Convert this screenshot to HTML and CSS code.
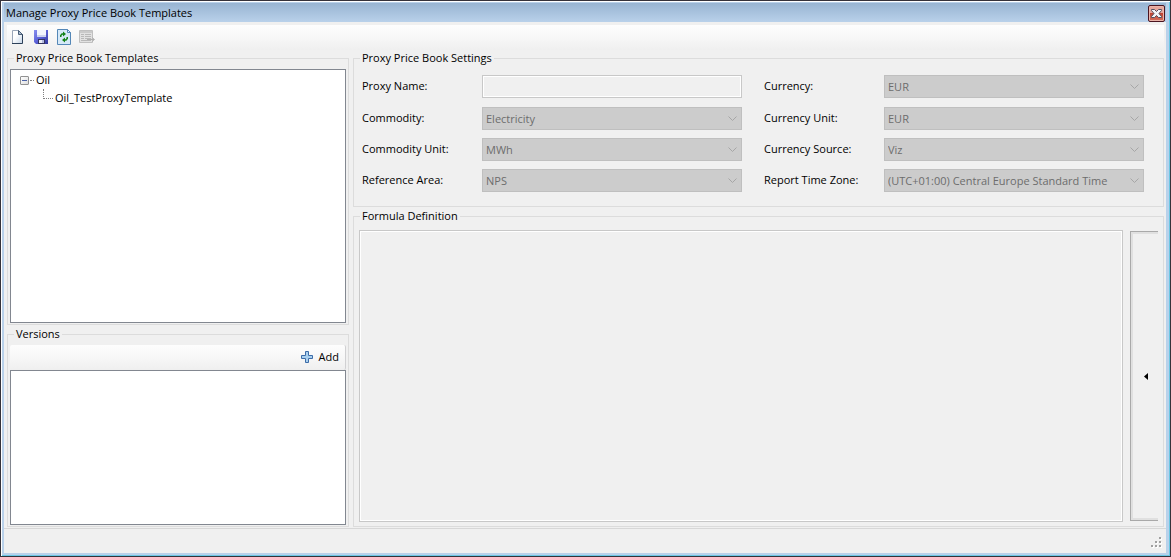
FILE: index.html
```html
<!DOCTYPE html>
<html lang="en">
<head>
<meta charset="utf-8">
<title>Manage Proxy Price Book Templates</title>
<link rel="stylesheet" href="styles.css">
</head>
<body>
<div class="window">
  <header class="titlebar">
    <h1 class="title">Manage Proxy Price Book Templates</h1>
    <button class="close" type="button" aria-label="Close">
      <svg width="11" height="9" viewBox="0 0 11 9"><path d="M0.500 0.500h3l2 2 2-2h3v1L8 4.500l2.500 3v1h-3l-2-2-2 2h-3v-1L3 4.500 0.500 1.500z" fill="#f4f4f6" stroke="#53505e"/></svg>
    </button>
  </header>

  <div class="toolbar main-tools" role="toolbar">
    <button class="tool" type="button" aria-label="New">
      <svg width="16" height="16" viewBox="0 0 16 16"><defs><linearGradient id="page" x1="0" y1="0" x2="1" y2="1"><stop offset=".4" stop-color="#fff"/><stop offset="1" stop-color="#c3d3e6"/></linearGradient></defs><path d="M2.500 1.500h7l3 4v9h-10z" fill="url(#page)"/><path d="M2.500 14V1.500H9" fill="none" stroke="#9aa6b8"/><path d="M2 14.500h10.500V5" fill="none" stroke="#2c4059"/><path d="M8.500 1.500v4h4z" fill="#a9bacd" stroke="#4a5f79"/></svg>
    </button>
    <button class="tool" type="button" aria-label="Save">
      <svg width="16" height="16" viewBox="0 0 16 16"><defs><linearGradient id="disk" x1="0" y1="0" x2="1" y2="1"><stop offset="0" stop-color="#8a90ee"/><stop offset=".5" stop-color="#5a60d6"/><stop offset="1" stop-color="#30369a"/></linearGradient></defs><path d="M1 1h14v14H3l-2-2z" fill="url(#disk)"/><path d="M4 1h9v7H4z" fill="#f2f4fc"/><path d="M4 6h9v2H4z" fill="#cbd1ee"/><path d="M5 10h7v5H5z" fill="#33355f"/><path d="M6 11h3v3H6z" fill="#e9ecf6"/><path d="M9 11h2v3H9z" fill="#b4bae0"/></svg>
    </button>
    <button class="tool" type="button" aria-label="Refresh">
      <svg width="16" height="16" viewBox="0 0 16 16"><path d="M1.500 0.500h10l3 3v12h-13z" fill="#d6e9f8" stroke="#5487b7"/><path d="M11.500 0.500v3h3z" fill="#f4faff" stroke="#5487b7"/><path d="M4.750 8V6.500L6 5h2M11.250 8v1.500L10 11H8" fill="none" stroke="#128217" stroke-width="1.500"/><path d="M7 2.500l3 2.500-3 2.500zM9 8.500L6 11l3 2.500z" fill="#128217"/></svg>
    </button>
    <button class="tool" type="button" aria-label="Export" disabled>
      <svg width="17" height="16" viewBox="0 0 17 16"><path d="M0.500 1.500h13v12h-13z" fill="#e2e2e2" stroke="#c0c0c0"/><path d="M1 2h12v2H1z" fill="#cacaca"/><path d="M2 5.500h3M6 5.500h6M2 7.500h3M6 7.500h6M2 9.500h3M6 9.500h6M2 11.500h10" stroke="#b8b8b8"/><path d="M8 10.500h7M13 8.500l2.500 2-2.500 2" fill="none" stroke="#b0b0b0"/></svg>
    </button>
  </div>

  <main class="panes">
    <div class="side">
      <fieldset class="group">
        <legend>Proxy Price Book Templates</legend>
        <ul class="tree">
          <li>
            <div class="node"><button class="twisty" type="button" aria-label="Collapse Oil"></button><span class="dots"></span><span>Oil</span></div>
            <ul class="branch">
              <li class="node"><span class="elbow"></span><span>Oil_TestProxyTemplate</span></li>
            </ul>
          </li>
        </ul>
      </fieldset>
      <fieldset class="group">
        <legend>Versions</legend>
        <div class="toolbar version-tools" role="toolbar">
          <button class="add" type="button">
            <svg width="12" height="12" viewBox="0 0 12 12"><path d="M4.500 0.500h3v4h4v3h-4v4h-3v-4h-4v-3h4z" fill="#a9d0ef" stroke="#3d6ca8"/></svg>
            Add
          </button>
        </div>
        <div class="list" role="listbox" aria-label="Versions"></div>
      </fieldset>
    </div>

    <div class="detail">
      <fieldset class="group settings">
        <legend>Proxy Price Book Settings</legend>
        <div class="fields">
          <label for="name">Proxy Name:</label>
          <input class="text" id="name" type="text" disabled>
          <label class="second" for="currency">Currency:</label>
          <div class="combo"><select id="currency" disabled><option>EUR</option></select><svg class="chevron" width="9" height="6" viewBox="0 0 9 6"><path d="M0.500 0.500l4 4 4-4"/></svg></div>

          <label for="commodity">Commodity:</label>
          <div class="combo"><select id="commodity" disabled><option>Electricity</option></select><svg class="chevron" width="9" height="6" viewBox="0 0 9 6"><path d="M0.500 0.500l4 4 4-4"/></svg></div>
          <label class="second" for="currency-unit">Currency Unit:</label>
          <div class="combo"><select id="currency-unit" disabled><option>EUR</option></select><svg class="chevron" width="9" height="6" viewBox="0 0 9 6"><path d="M0.500 0.500l4 4 4-4"/></svg></div>

          <label for="unit">Commodity Unit:</label>
          <div class="combo"><select id="unit" disabled><option>MWh</option></select><svg class="chevron" width="9" height="6" viewBox="0 0 9 6"><path d="M0.500 0.500l4 4 4-4"/></svg></div>
          <label class="second" for="source">Currency Source:</label>
          <div class="combo"><select id="source" disabled><option>Viz</option></select><svg class="chevron" width="9" height="6" viewBox="0 0 9 6"><path d="M0.500 0.500l4 4 4-4"/></svg></div>

          <label for="area">Reference Area:</label>
          <div class="combo"><select id="area" disabled><option>NPS</option></select><svg class="chevron" width="9" height="6" viewBox="0 0 9 6"><path d="M0.500 0.500l4 4 4-4"/></svg></div>
          <label class="second" for="zone">Report Time Zone:</label>
          <div class="combo"><select id="zone" disabled><option>(UTC+01:00) Central Europe Standard Time</option></select><svg class="chevron" width="9" height="6" viewBox="0 0 9 6"><path d="M0.500 0.500l4 4 4-4"/></svg></div>
        </div>
      </fieldset>
      <fieldset class="group formula">
        <legend>Formula Definition</legend>
        <div class="editor">
          <textarea class="text formula-text" aria-label="Formula Definition" disabled></textarea>
          <button class="expander" type="button" aria-label="Expand">
            <svg width="4" height="7" viewBox="0 0 4 7"><path d="M4 0v7L0 3.500z"/></svg>
          </button>
        </div>
      </fieldset>
    </div>
  </main>

  <footer class="statusbar">
    <svg width="11" height="11" viewBox="0 0 11 11"><path d="M9 1h2v2H9zM5 5h2v2H5zM9 5h2v2H9zM1 9h2v2H1zM5 9h2v2H5zM9 9h2v2H9z" fill="#fff"/><path d="M8 0h2v2H8zM4 4h2v2H4zM8 4h2v2H8zM0 8h2v2H0zM4 8h2v2H4zM8 8h2v2H8z" fill="#a0a0a0"/></svg>
  </footer>
</div>
</body>
</html>
```
FILE: styles.css
```css
* { box-sizing: border-box; }

body {
  margin: 0;
  background: #35323a;
  color: #000;
  font: 11px/16px "Open Sans", "Noto Sans", sans-serif;
}

button, input, select, textarea { font: inherit; color: inherit; }
button { padding: 0; border: 0; background: none; }
svg { display: block; }
ul { margin: 0; padding: 0; list-style: none; }

.window {
  display: flex;
  flex-direction: column;
  height: 100vh;
  padding: 2px 4px 3px 3px;
  border: 1px solid #35323a;
  background: #b9d1ea;
  box-shadow: inset 1px 1px #fff, inset -1px -1px #6cc8e4;
}

.titlebar {
  display: flex;
  flex-shrink: 0;
  justify-content: space-between;
  height: 19px;
  padding-left: 2px;
  background: linear-gradient(#98b4d2, #b9d1ea);
}
.title { margin: 0; font-size: 11px; font-weight: 400; line-height: 20px; }

.close {
  display: grid;
  place-items: center;
  width: 17px;
  height: 17px;
  margin: 2px 1px 0 0;
  border: 1px solid #4b1521;
  border-radius: 2px;
  background: linear-gradient(#e6a69d 0 45%, #bf4331 50%, #d7745f);
  box-shadow: inset 0 0 0 1px #eab4aa;
}

.toolbar {
  display: flex;
  flex-shrink: 0;
  align-items: center;
  height: 25px;
  padding-bottom: 1px;
  border-radius: 2px;
  border-right: 1px solid #d0d0d2;
  background: linear-gradient(#fdfdfd, #f7f7f7 50%, #efefef);
}
.main-tools {
  gap: 7px;
  height: 28px;
  padding: 0 3px 1px;
  border: solid #f0f0f0;
  border-width: 3px 2px 0 3px;
  border-radius: 0;
}

.panes {
  flex: 1;
  display: grid;
  grid-template-columns: 342px minmax(0, 1fr);
  gap: 4px;
  padding: 0 2px 0 3px;
  background: #f0f0f0;
}
.side {
  display: grid;
  grid-template-rows: 275fr 201fr;
  gap: 1px;
}
.detail {
  display: flex;
  flex-direction: column;
  gap: 1px;
}

.group {
  display: flex;
  flex-direction: column;
  min-width: 0;
  margin: 0;
  padding: 2px 2px 1px;
  border: 1px solid #dcdcdc;
}
.group legend { margin-left: 4px; padding: 0 2px; }

.tree, .list {
  flex: 1;
  border: 1px solid #828790;
  background: #fff;
}
.tree { margin-top: 1px; padding: 1px 9px; }
.node { display: flex; align-items: center; height: 18px; }
.twisty {
  display: grid;
  place-items: center;
  width: 9px;
  height: 9px;
  border: 1px solid #919191;
  border-radius: 1px;
  background: linear-gradient(135deg, #fff, #ddd);
}
.twisty::before { content: ""; width: 5px; height: 1px; background: #4b63a7; }
.dots { width: 4px; margin: 0 2px 0 1px; border-top: 1px dotted #808080; }
.branch { padding-left: 23px; }
.elbow {
  width: 10px;
  height: 10px;
  margin: 0 2px 8px 0;
  border: dotted #808080;
  border-width: 0 0 1px 1px;
}

.version-tools { justify-content: flex-end; padding-right: 6px; margin-top: 1px; }
.add { display: flex; align-items: center; gap: 6px; }

.settings { padding: 9px 19px 14px 8px; }
.settings legend { margin-left: -2px; }
.fields {
  display: grid;
  grid-template-columns: 120px minmax(0, 1fr) 142px minmax(0, 1fr);
  grid-template-rows: 24px;
  grid-auto-rows: 23px;
  row-gap: 8px;
}
.fields label { line-height: 22px; }
.second { padding-left: 22px; }
.text {
  width: 100%;
  height: 23px;
  border: 1px solid #c8c8c8;
  background: #f0f0f0;
  box-shadow: inset 0 0 0 1px #fff;
}
.combo { position: relative; height: 23px; }
.combo select {
  appearance: none;
  width: 100%;
  height: 23px;
  padding: 0 20px 0 3px;
  border: 1px solid #bfbfbf;
  border-radius: 0;
  background: #ccc;
  color: #6d6d6d;
  opacity: 1;
}
.chevron {
  position: absolute;
  top: 9px;
  right: 5px;
  fill: none;
  stroke: #a6a6a6;
  pointer-events: none;
}

.formula { flex: 1; padding: 6px 5px 4px; }
.formula legend { margin-left: 1px; }
.editor { flex: 1; display: flex; gap: 7px; }
.formula-text { flex: 1; height: auto; resize: none; }
.expander {
  display: grid;
  place-items: center;
  width: 28px;
  margin: 1px 0;
  padding-left: 2px;
  border: solid #a9a9a9;
  border-width: 1px 0 1px 1px;
  box-shadow: inset 2px 2px #e0e0e0, inset 0 -2px #e0e0e0;
}

.statusbar {
  display: flex;
  flex-shrink: 0;
  align-items: flex-end;
  justify-content: flex-end;
  height: 26px;
  padding: 0 4px 5px;
  background: linear-gradient(#f0f0f0 1px, #d7d7d7 1px 2px, #f0f0f0 2px);
}
```
